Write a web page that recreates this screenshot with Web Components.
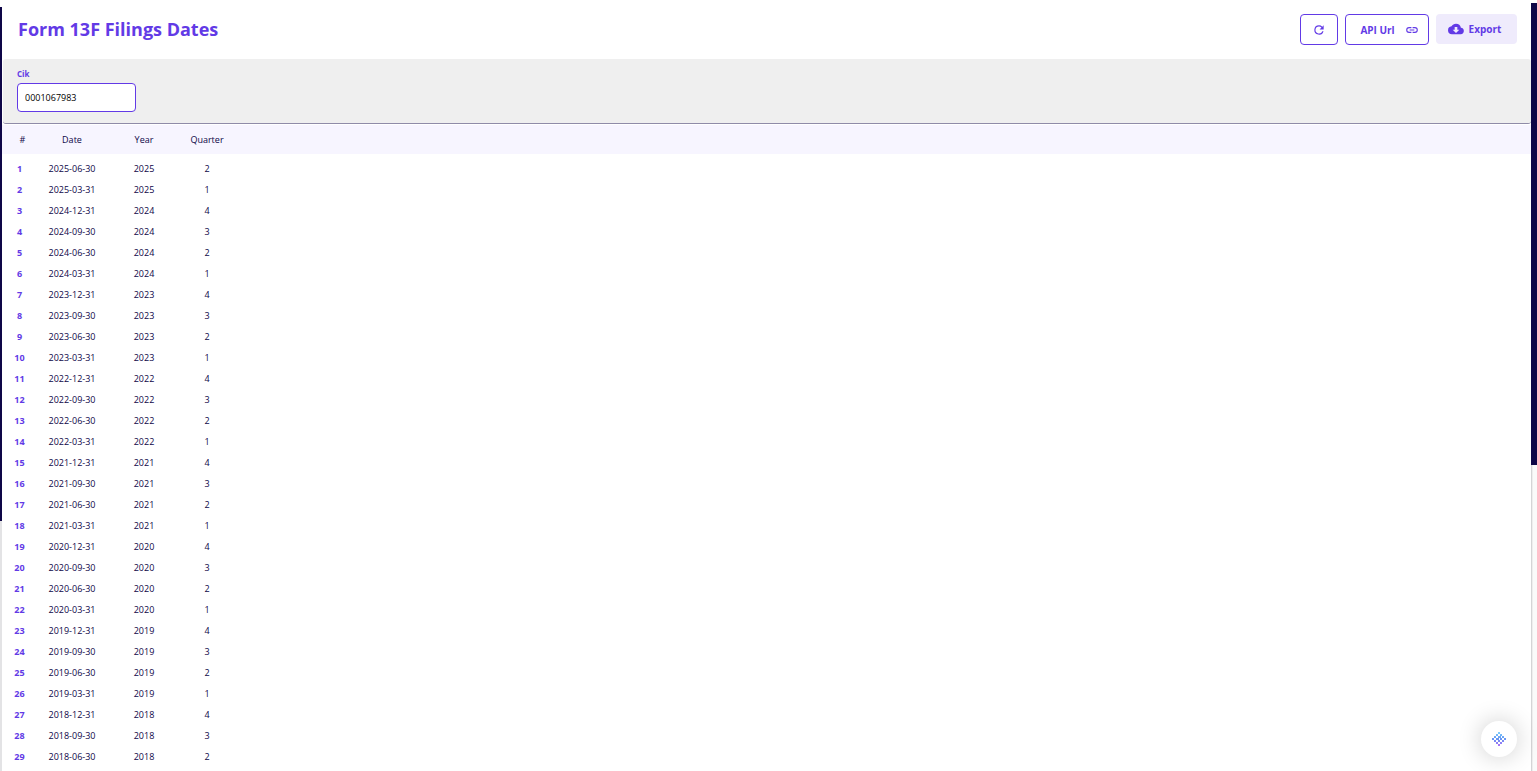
<!DOCTYPE html>
<html lang="en">
<head>
<meta charset="utf-8">
<meta name="viewport" content="width=device-width, initial-scale=1">
<title>Form 13F Filings Dates</title>
<style>
    body {
        --accent: #623ae6;
        --ink: #0e0647;
        --tint: #f7f5ff;
        margin: 0;
        background: #fafafa;
        color: var(--ink);
        font-family: 'Open Sans', 'Noto Sans', sans-serif;
    }
</style>
</head>
<body>
<api-frame>
    <page-header heading="Form 13F Filings Dates">
        <action-button kind="square" label="Refresh">
            <svg slot="icon" width="14" height="14" viewBox="0 0 24 24"><path fill="currentColor" d="M17.65 6.35A7.95 7.95 0 0 0 12 4a8 8 0 1 0 7.73 10h-2.08A6 6 0 1 1 12 6c1.66 0 3.14.69 4.22 1.78L13 11h7V4z"/></svg>
        </action-button>
        <action-button kind="outline">API Url
            <svg slot="icon" width="14" height="14" viewBox="0 0 24 24"><path fill="currentColor" d="M3.9 12A3.1 3.1 0 0 1 7 8.9h4V7H7a5 5 0 0 0 0 10h4v-1.9H7A3.1 3.1 0 0 1 3.9 12zM8 13h8v-2H8zM17 7h-4v1.9h4a3.1 3.1 0 0 1 0 6.2h-4V17h4a5 5 0 0 0 0-10z"/></svg>
        </action-button>
        <action-button kind="filled">Export
            <svg slot="icon" width="16" height="16" viewBox="0 0 24 24"><path fill="currentColor" d="M19.35 10.04A7.49 7.49 0 0 0 12 4C9.11 4 6.6 5.64 5.35 8.04A6 6 0 0 0 6 20h13a5 5 0 0 0 .35-9.96zM17 13l-5 5-5-5h3V9h4v4z"/></svg>
        </action-button>
    </page-header>
    <filter-bar>
        <filter-field label="Cik" value="0001067983"></filter-field>
    </filter-bar>
    <filings-table from="2025-2" count="29"></filings-table>
    <chat-launcher slot="overlay"></chat-launcher>
</api-frame>

<script>
class ApiFrame extends HTMLElement {
    constructor() {
        super();
        this.attachShadow({mode: 'open'}).innerHTML = `
            <style>
                :host {
                    display: grid;
                    grid-template-columns: 2px minmax(0, 1fr) 6px;
                    min-height: 100vh;
                }

                .left {
                    background: linear-gradient(#fff 7px, var(--ink) 7px 521px, #e3e3e5 521px);
                }

                .right {
                    background:
                        linear-gradient(#fff 3px, var(--ink) 3px 465px, transparent 465px),
                        linear-gradient(90deg, #d4d4d6 1px, #eee 1px 2px, #fafafa 2px);
                }

                main {
                    background: #fff;
                }
            </style>
            <div class="left"></div>
            <main><slot></slot></main>
            <div class="right"></div>
            <slot name="overlay"></slot>
        `;
    }
}

class PageHeader extends HTMLElement {
    constructor() {
        super();
        this.attachShadow({mode: 'open'}).innerHTML = `
            <style>
                :host {
                    display: flex;
                    align-items: flex-start;
                    justify-content: space-between;
                    height: 59px;
                    padding: 14px 14px 0 16px;
                    box-sizing: border-box;
                }

                h1 {
                    margin: 0;
                    color: var(--accent);
                    font-size: 18px;
                    font-weight: 700;
                    line-height: 30px;
                }

                .actions {
                    display: flex;
                    align-items: flex-start;
                    gap: 7px;
                }
            </style>
            <h1></h1>
            <div class="actions"><slot></slot></div>
        `;
    }

    connectedCallback() {
        this.shadowRoot.querySelector('h1').textContent = this.getAttribute('heading');
    }
}

class ActionButton extends HTMLElement {
    constructor() {
        super();
        this.attachShadow({mode: 'open'}).innerHTML = `
            <style>
                :host {
                    display: block;
                }

                button {
                    display: flex;
                    align-items: center;
                    justify-content: center;
                    height: 31px;
                    margin: 0;
                    padding: 0;
                    box-sizing: border-box;
                    border: 1px solid var(--accent);
                    border-radius: 4px;
                    background: #fff;
                    color: var(--accent);
                    font: 700 10px/16px 'Open Sans', 'Noto Sans', sans-serif;
                    white-space: nowrap;
                    cursor: pointer;
                }

                :host([kind="square"]) button {
                    width: 38px;
                }

                :host([kind="outline"]) button {
                    width: 84px;
                    gap: 10px;
                    padding-left: 5px;
                }

                :host([kind="filled"]) button {
                    flex-direction: row-reverse;
                    width: 81px;
                    height: 30px;
                    gap: 5px;
                    padding-right: 4px;
                    border: 0;
                    background: #efebfc;
                }

                ::slotted(svg) {
                    display: block;
                }
            </style>
            <button type="button"><slot></slot><slot name="icon"></slot></button>
        `;
    }

    connectedCallback() {
        if (this.hasAttribute('label')) {
            this.shadowRoot.querySelector('button').setAttribute('aria-label', this.getAttribute('label'));
        }
    }
}

class FilterBar extends HTMLElement {
    constructor() {
        super();
        this.attachShadow({mode: 'open'}).innerHTML = `
            <style>
                :host {
                    display: flex;
                    gap: 16px;
                    height: 65px;
                    margin: 0 0 1px 1px;
                    padding: 9px 14px 0;
                    box-sizing: border-box;
                    border-bottom: 1px solid #8f8ba8;
                    border-radius: 3px;
                    background: #efefef;
                }
            </style>
            <slot></slot>
        `;
    }
}

class FilterField extends HTMLElement {
    constructor() {
        super();
        this.attachShadow({mode: 'open'}).innerHTML = `
            <style>
                :host {
                    display: block;
                    width: 119px;
                }

                label {
                    display: block;
                    margin-bottom: 3px;
                    color: var(--accent);
                    font-size: 8px;
                    font-weight: 700;
                    line-height: 12px;
                }

                input {
                    display: block;
                    width: 100%;
                    height: 29px;
                    padding: 0 7px;
                    box-sizing: border-box;
                    border: 1px solid var(--accent);
                    border-radius: 4px;
                    background: #fff;
                    color: #000;
                    font: 9px 'Open Sans', 'Noto Sans', sans-serif;
                }
            </style>
            <label for="field"></label>
            <input id="field" type="text">
        `;
    }

    connectedCallback() {
        this.shadowRoot.querySelector('label').textContent = this.getAttribute('label');
        this.shadowRoot.querySelector('input').value = this.getAttribute('value');
    }
}

class FilingsTable extends HTMLElement {
    quarterEnds = ['03-31', '06-30', '09-30', '12-31'];

    constructor() {
        super();
        this.attachShadow({mode: 'open'}).innerHTML = `
            <style>
                :host {
                    display: block;
                }

                table {
                    width: 100%;
                    table-layout: fixed;
                    border-collapse: collapse;
                    font-size: 9px;
                    line-height: 13px;
                    text-align: center;
                }

                .num { width: 35px; }
                .date { width: 70px; }
                .year { width: 74px; }
                .quarter { width: 52px; }

                th, td {
                    height: 21px;
                    padding: 0;
                }

                thead {
                    background: var(--tint);
                }

                thead th {
                    height: 29px;
                    font-weight: 500;
                }

                thead th:first-child {
                    padding-left: 6px;
                }

                tbody::before {
                    content: '';
                    display: block;
                    height: 4px;
                }

                tbody th {
                    color: var(--accent);
                    font-weight: 700;
                }
            </style>
            <table>
                <colgroup><col class="num"><col class="date"><col class="year"><col class="quarter"><col></colgroup>
                <thead><tr><th>#</th><th>Date</th><th>Year</th><th>Quarter</th><td></td></tr></thead>
                <tbody></tbody>
            </table>
        `;
    }

    connectedCallback() {
        let [year, quarter] = this.getAttribute('from').split('-').map(Number);
        let rows = '';
        for (let i = 1; i <= Number(this.getAttribute('count')); i++) {
            rows += `<tr><th scope="row">${i}</th><td>${year}-${this.quarterEnds[quarter - 1]}</td><td>${year}</td><td>${quarter}</td><td></td></tr>`;
            quarter--;
            if (quarter === 0) {
                quarter = 4;
                year--;
            }
        }
        this.shadowRoot.querySelector('tbody').innerHTML = rows;
    }
}

class ChatLauncher extends HTMLElement {
    constructor() {
        super();
        this.attachShadow({mode: 'open'}).innerHTML = `
            <style>
                :host {
                    display: block;
                    position: fixed;
                    right: 20px;
                    bottom: 14px;
                }

                button {
                    display: flex;
                    align-items: center;
                    justify-content: center;
                    width: 36px;
                    height: 36px;
                    padding: 0;
                    border: 0;
                    border-radius: 50%;
                    background: #fff;
                    box-shadow: 0 0 24px rgba(0, 0, 0, 0.2);
                    cursor: pointer;
                }
            </style>
            <button type="button" aria-label="Open chat">
                <svg width="14" height="14" viewBox="0 0 14 14">
                    <defs>
                        <linearGradient id="fade" gradientUnits="userSpaceOnUse" x1="0" y1="0" x2="0" y2="14">
                            <stop offset="0" stop-color="#7fd0fb"/>
                            <stop offset="0.5" stop-color="#6795f2"/>
                            <stop offset="1" stop-color="#ab70f7"/>
                        </linearGradient>
                    </defs>
                    <path fill="url(#fade)" d="M6 0h2v2H6zM4 2h2v2H4zM8 2h2v2H8zM2 4h2v2H2zM6 4h2v2H6zM10 4h2v2h-2zM0 6h2v2H0zM4 6h2v2H4zM8 6h2v2H8zM12 6h2v2h-2zM2 8h2v2H2zM6 8h2v2H6zM10 8h2v2h-2zM4 10h2v2H4zM8 10h2v2H8zM6 12h2v2H6zM8 4h1v2H8zM6 6h1v2H6z"/>
                </svg>
            </button>
        `;
    }
}

customElements.define('api-frame', ApiFrame);
customElements.define('page-header', PageHeader);
customElements.define('action-button', ActionButton);
customElements.define('filter-bar', FilterBar);
customElements.define('filter-field', FilterField);
customElements.define('filings-table', FilingsTable);
customElements.define('chat-launcher', ChatLauncher);
</script>
</body>
</html>
